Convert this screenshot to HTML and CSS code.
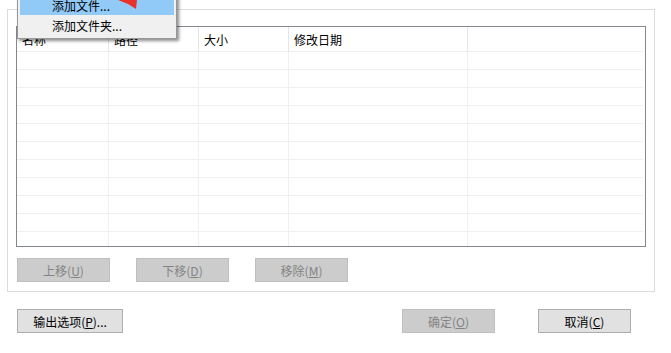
FILE: index.html
```html
<!DOCTYPE html>
<html lang="zh-CN">
<head>
    <meta charset="UTF-8">
    <title>添加文件</title>
    <link rel="stylesheet" href="styles.css">
</head>
<body>
    <div class="dialog">
        <div class="group">
            <div class="list">
                <div class="grid">
                    <div class="th">名称</div>
                    <div class="th">路径</div>
                    <div class="th">大小</div>
                    <div class="th">修改日期</div>
                    <div class="th last"></div>
                </div>
                <div class="rows" id="rows"></div>
            </div>
            <div class="btn-row">
                <button class="btn off">上移(<u>U</u>)</button>
                <button class="btn off">下移(<u>D</u>)</button>
                <button class="btn off">移除(<u>M</u>)</button>
            </div>
        </div>

        <div class="footer">
            <button class="btn wide">输出选项(<u>P</u>)...</button>
            <div class="spacer"></div>
            <button class="btn off">确定(<u>O</u>)</button>
            <button class="btn">取消(<u>C</u>)</button>
        </div>

        <!-- 弹出菜单 -->
        <div class="menu">
            <div class="item hot">添加文件...</div>
            <div class="item">添加文件夹...</div>
        </div>
        <svg class="arrow" width="24" height="12" viewBox="0 0 24 12">
            <polygon points="0,0 19,0 18,9 10,4" fill="#e8322b"/>
        </svg>
    </div>

    <script>
        // 空行
        const rows = document.getElementById("rows");
        for (let i = 0; i < 11; i++) {
            const r = document.createElement("div");
            r.className = "grid row";
            for (let j = 0; j < 5; j++) {
                const c = document.createElement("div");
                c.className = j === 4 ? "td last" : "td";
                r.appendChild(c);
            }
            rows.appendChild(r);
        }
    </script>
</body>
</html>
```

FILE: styles.css
```css
body {
    margin: 0;
    background-color: #fff;
    font-family: "Noto Sans CJK SC", "Microsoft YaHei", sans-serif;
    font-size: 12px;
    color: #000;
}

.dialog {
    width: 671px;
    height: 353px;
    position: relative;
    overflow: hidden;
}

.group {
    margin: 9px 0 0 7px;
    width: 630px;
    height: 265px;
    border: 1px solid #dcdcdc;
    padding: 16px 8px 0 8px;
}

.list {
    height: 219px;
    border: 1px solid #828790;
    overflow: hidden;
}

.grid {
    display: grid;
    grid-template-columns: 92px 90px 90px 179px 1fr;
}

.th {
    height: 24px;
    line-height: 26px;
    padding-left: 5px;
    border-right: 1px solid #e5e5e5;
    border-bottom: 1px solid #f0f0f0;
}

.td {
    height: 17px;
    border-right: 1px solid #f0f0f0;
    border-bottom: 1px solid #f0f0f0;
}

.last {
    border-right: none;
    margin-right: 2px;
}

.btn-row {
    display: flex;
    gap: 26px;
    margin-top: 11px;
    padding-left: 1px;
}

.btn {
    width: 93px;
    height: 24px;
    padding: 0;
    font-family: inherit;
    font-size: 12px;
    color: #000;
    background-color: #e1e1e1;
    border: 1px solid #adadad;
}

.btn.off {
    color: #838383;
    background-color: #cccccc;
    border-color: #bfbfbf;
}

.btn.wide {
    width: 106px;
}

.footer {
    display: flex;
    gap: 43px;
    margin-top: 17px;
    padding-left: 17px;
    width: 614px;
}

.spacer {
    flex: 1;
}

.menu {
    position: absolute;
    left: 17px;
    top: -8px;
    width: 154px;
    background-color: #f0f0f0;
    border: 1px solid #979797;
    padding: 2px 2px 3px;
    box-shadow: 2px 2px 3px rgba(0, 0, 0, 0.45);
}

.item {
    height: 20px;
    line-height: 22px;
    padding-left: 32px;
    overflow: hidden;
}

.item.hot {
    background-color: #91c9f7;
}

.arrow {
    position: absolute;
    left: 118px;
    top: 0;
}
```
